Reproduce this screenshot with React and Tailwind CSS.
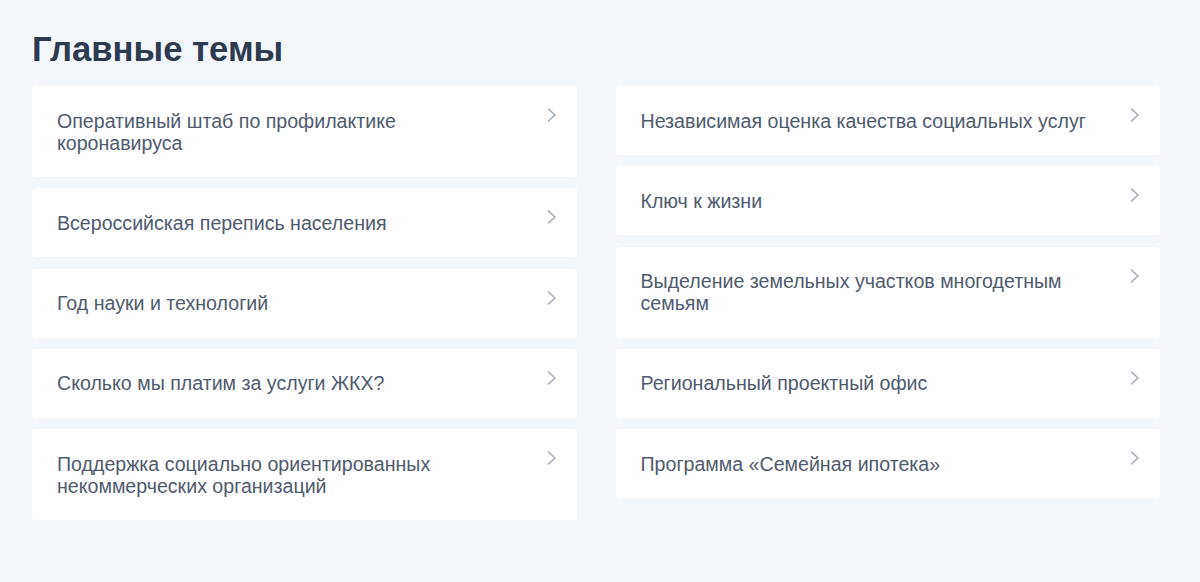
import React from "react";

const leftTopics = [
  "Оперативный штаб по профилактике коронавируса",
  "Всероссийская перепись населения",
  "Год науки и технологий",
  "Сколько мы платим за услуги ЖКХ?",
  "Поддержка социально ориентированных некоммерческих организаций",
];

const rightTopics = [
  "Независимая оценка качества социальных услуг",
  "Ключ к жизни",
  "Выделение земельных участков многодетным семьям",
  "Региональный проектный офис",
  "Программа «Семейная ипотека»",
];

function Chevron() {
  return (
    <svg width="10" height="14" viewBox="0 0 10 14" fill="none" className="shrink-0 mt-[-1.5px]">
      <path d="M1.5 1 L8 7 L1.5 13" stroke="#a3acb9" strokeWidth="1.6" strokeLinecap="round" strokeLinejoin="round" />
    </svg>
  );
}

function TopicCard({ title }) {
  return (
    <a
      href="#"
      className="flex items-start justify-between bg-white rounded-[4px] pl-[25px] pr-[20px] pt-[23.5px] pb-[23.5px]"
    >
      <span className="text-[19.6px] leading-[22px] text-[#4f5b6d] max-w-[460px]">{title}</span>
      <Chevron />
    </a>
  );
}

export default function App() {
  return (
    <div
      className="min-h-[582px] bg-[#f3f6fa] pt-[29px] pl-8"
      style={{ fontFamily: '"Liberation Sans", Arial, sans-serif' }}
    >
      <h1 className="text-[34.7px] leading-[40px] font-bold text-[#2d3a4f] mb-[17px]">Главные темы</h1>
      <div className="grid grid-cols-2 gap-x-[39px] w-[1128px] items-start">
        <div className="flex flex-col gap-[11.3px]">
          {leftTopics.map((t) => (
            <TopicCard key={t} title={t} />
          ))}
        </div>
        <div className="flex flex-col gap-[11.3px]">
          {rightTopics.map((t) => (
            <TopicCard key={t} title={t} />
          ))}
        </div>
      </div>
    </div>
  );
}
